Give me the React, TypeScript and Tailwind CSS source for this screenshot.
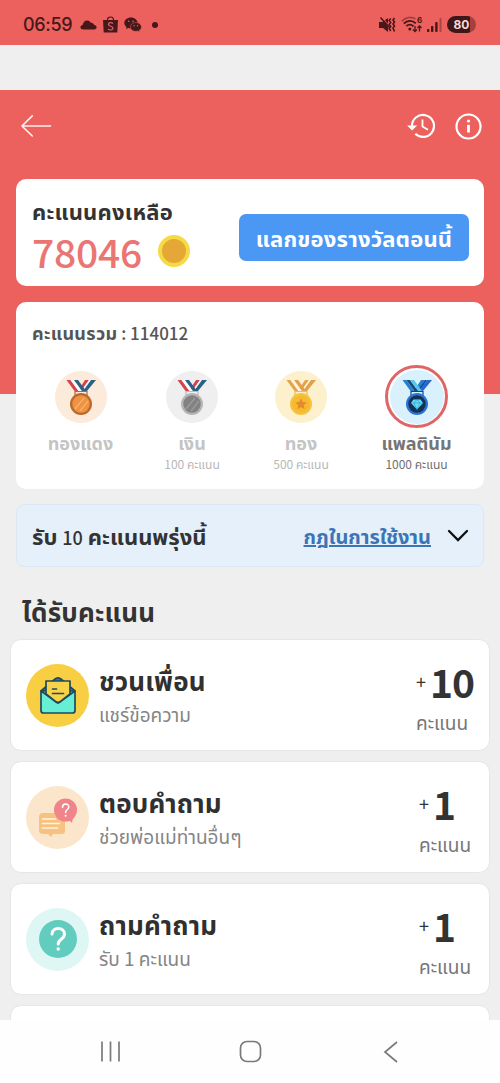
import React from "react";

type Ribbon = { l1: string; l2: string; r1: string; r2: string; end?: string; ring: string; disc: string; shine: string; clip: string };

function Medal({ c, kind }: { c: Ribbon; kind?: "star" | "gem" }) {
  return (
    <svg width="32" height="38" viewBox="0 0 32 38">
      <path d="M20 2h4l-7 11h-4z" fill={c.l1} />
      <path d="M24 2h2l-7 11h-3z" fill={c.r2} />
      <path d="M26 2h5l-9 11h-4z" fill={c.end ?? c.r1} />
      <path d="M1.500 2h4l8 11h-4z" fill={c.l1} />
      <path d="M5.500 2h3.500l8 11h-3.500z" fill={c.l2} />
      <path d="M9 2h4l8 11h-4z" fill={c.r1} />
      <path d="M10 19v-5.500h12V19" fill="none" stroke={c.clip} strokeWidth="1.200" />
      <circle cx="16" cy="26" r="11" fill={c.ring} />
      <circle cx="16" cy="26" r="8.700" fill={c.disc} />
      {!kind && <path d="M10 31l9-11M15 33l8-10" stroke={c.shine} strokeWidth="1.500" opacity=".6" />}
      {kind === "star" && (
        <path d="M16 20.300l1.700 3.800 4.100.4-3.100 2.700.9 4-3.600-2.100-3.600 2.100.9-4-3.100-2.700 4.100-.4z" fill={c.shine} />
      )}
      {kind === "gem" && (
        <g>
          <path d="M12.500 21.500h7l2.500 3.500-6 6.500-6-6.500z" fill={c.shine} />
          <path d="M10 25h12M13 25l3 6.500 3-6.500-3-3.500z" fill="none" stroke="#2b9fd9" strokeWidth=".7" />
        </g>
      )}
    </svg>
  );
}

const bronze: Ribbon = { l1: "#d6434d", l2: "#fff", r1: "#286284", r2: "#fff", ring: "#b86a2c", disc: "#ef9244", shine: "#ffc27e", clip: "#b86a2c" };
const silver: Ribbon = { l1: "#d6434d", l2: "#fff", r1: "#286284", r2: "#fff", ring: "#b5b5b5", disc: "#828282", shine: "#aaaaaa", clip: "#bababa" };
const gold: Ribbon = { l1: "#e5a448", l2: "#fff4e2", r1: "#e2a04c", r2: "#fff4e2", ring: "#f4c340", disc: "#f7b92e", shine: "#e18a2e", clip: "#eebd52" };
const platinum: Ribbon = { l1: "#2680cc", l2: "#174a75", r1: "#58c6ee", r2: "#174a9a", end: "#2867d0", ring: "#2f72d6", disc: "#123256", shine: "#69dcf2", clip: "#164574" };

function Level(p: { medal: React.ReactNode; bg: string; name: string; pts?: string; active?: boolean; width: string }) {
  return (
    <div className={`flex flex-col items-center ${p.width}`}>
      <div className={`flex size-[63px] items-center justify-center rounded-full ${p.active ? "border-[3px] border-[#e06666]" : ""}`}>
        <div className={`flex items-center justify-center rounded-full ${p.active ? "size-[54px]" : "size-[52px]"} ${p.bg}`}>
          {p.medal}
        </div>
      </div>
      <div className={`mt-[2px] h-[24px] whitespace-nowrap text-[18px] leading-[24px] font-bold ${p.active ? "text-[#757575]" : "text-[#c4c4c4]"}`}>{p.name}</div>
      <div className={`mt-[2px] whitespace-nowrap text-[12px] leading-[16px] ${p.active ? "text-[#707070]" : "text-[#b8b8b8]"}`}>{p.pts}</div>
    </div>
  );
}

function Task(p: { icon: React.ReactNode; bg: string; title: string; sub: string; pts: string; right: string }) {
  return (
    <div className="flex h-[112px] w-full shrink-0 items-center rounded-[11px] border border-[#e6e6e6] bg-white pl-[15px]">
      <div className={`flex size-[63px] shrink-0 items-center justify-center rounded-full ${p.bg}`}>{p.icon}</div>
      <div className="ml-[10px] flex flex-1 flex-col pt-[4px]">
        <div className="whitespace-nowrap text-[26px] leading-[34px] font-bold tracking-[0.2px] text-[#303030]">{p.title}</div>
        <div className="whitespace-nowrap text-[19px] leading-[34px] text-[#858585]">{p.sub}</div>
      </div>
      <div className={`flex flex-col pt-[9px] ${p.right}`}>
        <div className="flex h-[44px] items-center gap-[4px] text-[#333]">
          <span className="text-[18px] leading-[24px]">+</span>
          <span className="text-[39px] leading-[44px] font-bold tracking-[-1px]">{p.pts}</span>
        </div>
        <div className="whitespace-nowrap text-[19px] leading-[37px] text-[#777]">คะแนน</div>
      </div>
    </div>
  );
}

function StatusBar() {
  return (
    <div className="flex h-[45px] items-center justify-between bg-[#ec615d] pr-[24px] pl-[23px] pt-[4px] text-[#461819]">
      <div className="flex items-center">
        <span className="w-[57px] font-['Inter'] text-[18px] leading-[24px] font-medium tracking-[-0.3px]">06:59</span>
        <svg width="17" height="12" viewBox="0 0 17 12" fill="currentColor">
          <path d="M3.500 10.500C1.500 10.500.5 9.500.5 8.200.5 7 1.500 6 2.700 6c.4-2.500 2-4.500 4.300-4.500 1.700 0 3 .8 3.700 2.200 1.700-.3 3.100.7 3.400 2.200 1.500.2 2.500 1.100 2.500 2.400 0 1.300-1 2.200-2.500 2.200z" />
        </svg>
        <svg className="ml-[6px]" width="15" height="17" viewBox="0 0 15 17">
          <path d="M4.500 5V3.800C4.500 2 5.800 1 7.500 1s3 1 3 2.800V5" fill="none" stroke="currentColor" strokeWidth="1.100" />
          <path d="M0 4h15l-.7 12.500H.7z" fill="currentColor" />
          <path d="M10 7.400C8 6 5.400 6.500 5.400 8.300c0 2.300 4.600 1.500 4.600 3.900 0 2-2.900 2.400-5 .8" fill="none" stroke="#dc6561" strokeWidth="1.200" />
        </svg>
        <svg className="ml-[6px]" width="18" height="15" viewBox="0 0 18 15">
          <path d="M7 .5C3.300.5.3 2.900.3 6c0 1.700.9 3.200 2.300 4.200L2 12.200l2.400-1.300c.8.200 1.700.4 2.600.4 3.700 0 6.600-2.400 6.600-5.300S10.700.5 7 .5z" fill="currentColor" />
          <path d="M11.800 5.500c-3 0-5.500 2-5.500 4.400s2.500 4.400 5.500 4.400c.7 0 1.400-.1 2-.3l2 1-.5-1.700c1.300-.8 2.100-2 2.100-3.400 0-2.400-2.500-4.400-5.600-4.400z" fill="currentColor" stroke="#ec615d" strokeWidth=".5" />
          <g fill="#dc6561"><circle cx="4.700" cy="4.200" r=".8" /><circle cx="9" cy="4.200" r=".8" /><circle cx="10" cy="8.700" r=".7" /><circle cx="13.600" cy="8.700" r=".7" /></g>
        </svg>
        <span className="ml-[10px] size-[6px] rounded-full bg-[#461819]" />
      </div>
      <div className="flex items-center">
        <svg width="17" height="16" viewBox="0 0 17 16">
          <path d="M0 5h3.500L9 1v14l-5-4H0z" fill="currentColor" />
          <path d="M3 1l10 11" stroke="#ec615d" strokeWidth="1.200" />
          <path d="M1.500 .5l9.500 10.500" stroke="currentColor" strokeWidth="1.500" />
          <path d="M11.700 1.500l-1.500 2 1.500 2-1.500 2 1.500 2-1.500 2 1.500 2.500M15.500 1l-1.500 2 1.500 2-1.500 2 1.500 2-1.500 2 1.500 3.500" fill="none" stroke="currentColor" strokeWidth="1.600" />
        </svg>
        <svg className="ml-[5px]" width="22" height="17" viewBox="0 0 22 17" fill="none" stroke="currentColor">
          <path d="M.8 5.200C5 1 10.500.5 14.500 2.800" strokeWidth="1.400" opacity=".5" />
          <path d="M2.800 7.600c3.500-3.400 8.500-3.500 12-.3M5.300 10.200c2-1.900 5-1.900 7.200 0" strokeWidth="1.800" />
          <circle cx="8.800" cy="13" r="1.500" fill="currentColor" stroke="none" />
          <path d="M14 10v5.500m-2-2 2 2 2-2M18.500 15.500V10m-2 2 2-2 2 2" strokeWidth="1.300" />
          <text x="16" y="6.800" fontSize="8" fontWeight="700" fontFamily="Inter" fill="currentColor" stroke="none">6</text>
        </svg>
        <svg className="ml-[4px]" width="16" height="16" viewBox="0 0 16 16" fill="currentColor">
          <rect x="0" y="12" width="2.400" height="3" rx=".8" /><rect x="4" y="9" width="2.400" height="6" rx=".8" />
          <rect x="8.200" y="5" width="2.400" height="10" rx=".8" /><rect x="12.500" y="1" width="2" height="14" rx=".8" opacity=".4" />
        </svg>
        <div className="ml-[4px] flex h-[17px] w-[29px] items-center justify-center rounded-full bg-[linear-gradient(90deg,#401719_23px,#a4403e_23px)] font-['Inter'] text-[12px] leading-[17px] font-bold text-[#f2dada]">80</div>
      </div>
    </div>
  );
}

export default function App() {
  return (
    <div className="flex h-[1083px] w-[500px] flex-col overflow-hidden bg-[#efefef] font-['Noto_Sans_CJK_SC','Noto_Sans_Thai',sans-serif]">
      <StatusBar />
      <div className="h-[45px] shrink-0" />
      <main className="flex h-[930px] shrink-0 flex-col overflow-hidden bg-[linear-gradient(#ec615d_304px,#efefef_304px)]">
        <header className="flex h-[89px] shrink-0 items-center justify-between pr-[18px] pb-[17px] pl-[20px]">
          <svg width="32" height="24" viewBox="0 0 33 24" fill="none" stroke="#fff" strokeOpacity=".9" strokeWidth="1.700" strokeLinecap="round" strokeLinejoin="round"><path d="M31.500 12H2M12.700 1.500 2 12l10.700 10.300" /></svg>
          <div className="flex items-center gap-[20px]">
            <svg width="28" height="26" viewBox="0 0 28 26" fill="none" stroke="#fff" strokeWidth="2.200">
              <path d="M5 13.500A11 11 0 1 1 8.300 20.800" /><path d="M.2 12.500h10L5 17.500z" fill="#fff" stroke="none" /><path d="M15.500 6.500v7l5.500 3.200" strokeWidth="1.800" />
            </svg>
            <svg width="27" height="27" viewBox="0 0 27 27" fill="none" stroke="#fff">
              <circle cx="13.500" cy="13.500" r="12" strokeWidth="2.200" /><circle cx="13.500" cy="8" r="1.600" fill="#fff" stroke="none" /><path d="M13.500 11.800v7.700" strokeWidth="2.800" />
            </svg>
          </div>
        </header>
        <section className="mx-[16px] flex h-[107px] shrink-0 items-center justify-between rounded-[10px] bg-white pr-[15px] pl-[16px]">
          <div className="pt-[4px]">
            <div className="whitespace-nowrap text-[22px] leading-[32px] font-bold tracking-[0.2px] text-[#333]">คะแนนคงเหลือ</div>
            <div className="flex h-[50px] items-center gap-[16px]">
              <span className="text-[39px] leading-[50px] font-medium tracking-[-0.2px] text-[#ea7572]">78046</span>
              <span className="size-[32px] rounded-full border-4 border-[#f5da45] bg-[#e5a735]" />
            </div>
          </div>
          <div className="mt-[10px] flex h-[47px] w-[230px] items-center justify-center whitespace-nowrap rounded-[7px] bg-[#4b98f4] text-[22px] leading-[47px] font-bold tracking-[0.2px] text-white">แลกของรางวัลตอนนี้</div>
        </section>
        <section className="mx-[16px] mt-[16px] h-[187px] shrink-0 rounded-[10px] bg-white pt-[14px]">
          <div className="h-[32px] whitespace-nowrap pl-[16px] text-[17px] leading-[32px] font-medium text-[#555]"><span className="text-[18px] font-bold tracking-[0.3px]">คะแนนรวม</span> : 114012</div>
          <div className="mt-[17px] flex pl-[9px]">
            <Level width="w-[111px]" bg="bg-[#fceadb]" name="ทองแดง" medal={<Medal c={bronze} />} />
            <Level width="w-[112px]" bg="bg-[#efefef]" name="เงิน" pts="100 คะแนน" medal={<Medal c={silver} />} />
            <Level width="w-[106px]" bg="bg-[#fdf0cd]" name="ทอง" pts="500 คะแนน" medal={<Medal c={gold} kind="star" />} />
            <Level width="w-[125px]" bg="bg-[#d8f1fc]" name="แพลตินัม" pts="1000 คะแนน" active medal={<Medal c={platinum} kind="gem" />} />
          </div>
        </section>
        <section className="mx-[16px] mt-[15px] flex h-[63px] shrink-0 items-center rounded-[8px] border border-[#dce8f5] bg-[#e5f0fb] pr-[14px] pl-[15px]">
          <span className="flex-1 whitespace-nowrap text-[22px] leading-[32px] font-bold text-[#333]">รับ <span className="text-[18px] font-medium">10</span> คะแนนพรุ่งนี้</span>
          <span className="whitespace-nowrap text-[20px] leading-[32px] font-bold text-[#3c74b5] underline">กฎในการใช้งาน</span>
          <svg className="ml-[16px]" width="22" height="14" viewBox="0 0 22 14" fill="none" stroke="#111" strokeWidth="2.300" strokeLinecap="round"><path d="M2 2l9 9 9-9" /></svg>
        </section>
        <h2 className="mt-[24px] h-[40px] shrink-0 whitespace-nowrap pl-[22px] text-[26px] leading-[40px] font-bold tracking-[0.2px] text-[#333]">ได้รับคะแนน</h2>
        <div className="mt-[8px] flex flex-col gap-[10px] px-[10px]">
          <Task bg="bg-[#f8ce42]" title="ชวนเพื่อน" sub="แชร์ข้อความ" pts="10" right="w-[73px]" icon={
            <svg width="38" height="40" viewBox="0 0 38 40" stroke="#1e4a5e" strokeWidth="1.700" strokeLinejoin="round" strokeLinecap="round">
              <path d="M2 16 15.500 4.500q3.500-3 7 0L36 16z" fill="#2881cc" />
              <path d="M2 16v19.500q0 2.500 2.500 2.500h29q2.500 0 2.500-2.500V16L19 28z" fill="#67efd6" />
              <path d="M7 6h24v13l-9.500 7.500q-2.500 2-5 0L7 19z" fill="#f8d34a" />
              <path d="M13.500 14h4M13.500 18.500h11" fill="none" />
            </svg>} />
          <Task bg="bg-[#fbe6cb]" title="ตอบคำถาม" sub="ช่วยพ่อแม่ท่านอื่นๆ" pts="1" right="w-[70px]" icon={
            <svg width="40" height="40" viewBox="0 0 40 40">
              <path d="M5 16h18q4 0 4 4v14q0 3-3 3H15l-2 3-3-3H5q-4 0-4-4V20q0-4 4-4z" fill="#f7c27f" />
              <path d="M4.500 22h13M4.500 26.500h17M4.500 31h15" stroke="#fff4e3" strokeWidth="1.700" strokeLinecap="round" />
              <circle cx="27.500" cy="13" r="11.500" fill="#ef858a" /><path d="M30 22l4 4 1-6z" fill="#ef858a" />
              <path d="M24.500 10.500c0-4.500 6.300-4.500 6.300-.5 0 2.500-3.200 2.500-3.200 5.500" fill="none" stroke="#fff" strokeWidth="1.500" strokeLinecap="round" /><circle cx="27.600" cy="18.800" r="1" fill="#fff" />
            </svg>} />
          <Task bg="bg-[#dff7f4]" title="ถามคำถาม" sub="รับ 1 คะแนน" pts="1" right="w-[70px]" icon={
            <svg width="38" height="38" viewBox="0 0 38 38">
              <circle cx="19" cy="19" r="19" fill="#62cdbf" />
              <path d="M13 14c0-7.500 12.500-7 12.500 0 0 5.500-6.300 5-6.300 10" fill="none" stroke="#fff" strokeWidth="3" strokeLinecap="round" /><circle cx="19.200" cy="29" r="1.700" fill="#fff" />
            </svg>} />
          <div className="h-[112px] shrink-0 rounded-[11px] border border-[#e6e6e6] bg-white" />
        </div>
      </main>
      <nav className="flex h-[63px] shrink-0 items-center justify-between bg-[#fefefe] pr-[102px] pl-[100px] text-[#7a7a7a]">
        <svg width="21" height="21" viewBox="0 0 21 21" stroke="currentColor" strokeWidth="1.700"><path d="M2 .5v20M10.500.5v20M19 .5v20" /></svg>
        <svg className="mr-[3px]" width="23" height="23" viewBox="0 0 23 23" fill="none" stroke="currentColor" strokeWidth="1.700"><rect x="1.500" y="1.500" width="20" height="20" rx="6.500" /></svg>
        <svg width="15" height="22" viewBox="0 0 15 22" fill="none" stroke="currentColor" strokeWidth="1.700"><path d="M14 1 2 11l12 10" /></svg>
      </nav>
    </div>
  );
}
